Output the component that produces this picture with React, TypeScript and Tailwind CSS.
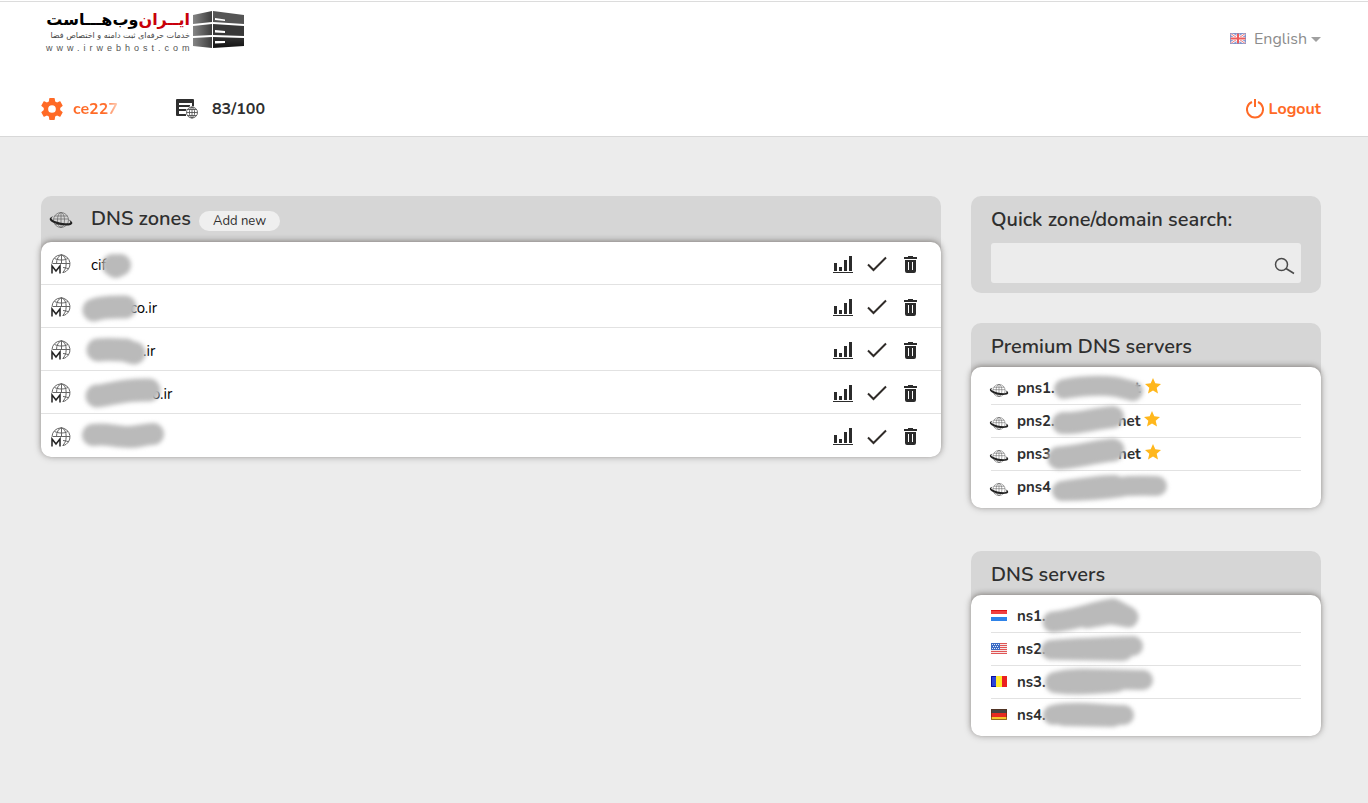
import { useState } from "react";

type IconProps = { className?: string };

type Zone = { name: string; gap: string; smudge: string; brush: number };

type Server = {
  name: string;
  tail?: string;
  tailGap?: string;
  flag?: string;
  star?: boolean;
  smudge: string;
  brush: number;
};

// Smudge paths are brush strokes, measured from the row's name cell.
const zones: Zone[] = [
  { name: "cif", gap: "pl-0", smudge: "M22 21 L25 23 L29 21", brush: 22 },
  { name: "co.ir", gap: "pl-[39px]", smudge: "M3 23 C14 19 26 20 34 20", brush: 23 },
  { name: ".ir", gap: "pl-[52px]", smudge: "M7 20 C16 19 26 20 35 20 M36 21 L43 23", brush: 23 },
  { name: "o.ir", gap: "pl-[61px]", smudge: "M6 23 C20 22 30 16 58 17", brush: 23 },
  { name: "", gap: "pl-0", smudge: "M2 19 C16 17 24 21 38 21 C48 21 54 18 62 18", brush: 22 },
];

const premium: Server[] = [
  { name: "pns1.", tail: "t", tailGap: "ml-[80px]", star: true, smudge: "M47 17 C65 14 85 13 100 15 L116 19", brush: 20 },
  { name: "pns2.", tail: "net", tailGap: "ml-[63px]", star: true, smudge: "M46 18 C60 19 75 14 96 12", brush: 22 },
  { name: "pns3", tail: "net", tailGap: "ml-[67px]", star: true, smudge: "M42 20 C60 19 75 14 96 12", brush: 23 },
  { name: "pns4", smudge: "M45 20 C60 18 80 14 98 14 M46 20 C75 20 90 18 104 16 C115 14 125 15 140 15", brush: 20 },
];

const servers: Server[] = [
  { name: "ns1.", flag: "nl", smudge: "M36 22 C60 20 75 12 96 9 L111 17 L94 14 L70 18", brush: 21 },
  { name: "ns2.", flag: "us", smudge: "M34 17 C60 15 90 14 116 13 M40 17 L106 18", brush: 20 },
  { name: "ns3.", flag: "ro", smudge: "M38 16 C60 10 90 14 126 14 M38 17 C60 20 80 18 100 16", brush: 20 },
  { name: "ns4.", flag: "de", smudge: "M36 16 C60 11 85 16 107 16 M46 17 L96 18", brush: 20 },
];

const Smudge = ({ d, brush }: { d: string; brush: number }) => (
  <svg
    aria-hidden="true"
    width="160"
    height="34"
    className="absolute left-0 top-0 overflow-visible pointer-events-none blur-[2px]"
  >
    <path d={d} fill="none" stroke="#bababa" strokeWidth={brush} strokeLinecap="round" strokeLinejoin="round" />
  </svg>
);

const ServerLogo = () => (
  <svg width="51" height="38" viewBox="0 0 51 38" aria-hidden="true">
    <defs>
      <linearGradient id="side" x1="0" x2="1">
        <stop offset="0" stopColor="#858585" />
        <stop offset="1" stopColor="#3d3d3d" />
      </linearGradient>
      <linearGradient id="front" x1="0" x2="0" y1="0" y2="1">
        <stop offset="0" stopColor="#333" />
        <stop offset="1" stopColor="#111" />
      </linearGradient>
    </defs>
    <path d="M0 5 L19 1 V12 L0 14 Z M0 16 L19 14 V25 L0 26 Z M0 28 L19 27 V38 L0 36 Z" fill="url(#side)" />
    <path d="M20 1 L51 5 V14 L20 12 Z" fill="#555" />
    <path d="M20 14 L51 16 V26 L20 25 Z" fill="#383838" />
    <path d="M20 27 L51 28 V36 L20 38 Z" fill="url(#front)" />
    <path d="M22 8 L32 9.500 V11 L22 10 Z M22 20 L32 21 V23 L22 22.500 Z M22 31 H32 V33 L22 33.500 Z" fill="#fff" />
  </svg>
);

const Gear = () => (
  <svg width="22" height="22" viewBox="2 2 20 20" fill="currentColor" aria-hidden="true">
    <path d="M19.43 12.98c.04-.32.07-.64.07-.98s-.03-.66-.07-.98l2.11-1.65c.19-.15.24-.42.12-.64l-2-3.46c-.12-.22-.39-.3-.61-.22l-2.49 1c-.52-.4-1.08-.73-1.69-.98l-.38-2.65A.49.49 0 0 0 14 2h-4c-.25 0-.46.18-.49.42l-.38 2.65c-.61.25-1.17.59-1.69.98l-2.49-1c-.23-.09-.49 0-.61.22l-2 3.46c-.13.22-.07.49.12.64l2.11 1.65c-.04.32-.07.65-.07.98s.03.66.07.98l-2.11 1.65c-.19.15-.24.42-.12.64l2 3.46c.12.22.39.3.61.22l2.49-1c.52.4 1.08.73 1.69.98l.38 2.65c.03.24.24.42.49.42h4c.25 0 .46-.18.49-.42l.38-2.65c.61-.25 1.17-.59 1.69-.98l2.49 1c.23.09.49 0 .61-.22l2-3.46c.12-.22.07-.49-.12-.64zM12 15.5a3.5 3.5 0 1 1 0-7 3.500 3.500 0 0 1 0 7z" />
  </svg>
);

const ZoneCount = () => (
  <svg width="23" height="20" viewBox="0 0 23 20" aria-hidden="true">
    <path d="M1 0 H17 Q18 0 18 1 V9 H16 V4 H3 V6 H14 V8 H3 V10 H11 V12 H3 V15 H10 V17 H1 Q0 17 0 16 V1 Q0 0 1 0 Z" fill="#2f2f2f" />
    <circle cx="16" cy="13.500" r="6.500" fill="#fff" />
    <g fill="none" stroke="#444" strokeWidth="0.800">
      <circle cx="16" cy="13.500" r="5.500" />
      <ellipse cx="16" cy="13.500" rx="2.600" ry="5.500" />
      <path d="M16 8 V19 M10.500 13.500 H21.500 M11.500 10.500 H20.500 M11.500 16.500 H20.500" />
    </g>
  </svg>
);

const Planet = ({ className }: IconProps) => (
  <svg viewBox="0 0 24 16" className={className} aria-hidden="true">
    <g fill="none" stroke="#666" strokeWidth="0.700">
      <circle cx="12" cy="8" r="7.500" />
      <ellipse cx="12" cy="8" rx="3.500" ry="7.500" />
      <path d="M12 0.500 V15.500 M5.500 4 H18.500 M4.500 7 H19.500 M6 12.500 H18" />
    </g>
    <path d="M4.500 4.500 C0 5 -0.500 8 3 10 C8 13 17 14.500 21.500 13 C25 11.500 23 9 19.500 7.500 C22 9.500 22 11 19 11.300 C14 11.600 7 10 3.800 8 C1.500 6.500 2.500 5.300 4.500 4.500 Z" fill="#222" />
  </svg>
);

const MasterGlobe = () => (
  <svg width="20" height="20" viewBox="0 0 20 20" aria-hidden="true">
    <g fill="none" stroke="#666" strokeWidth="1">
      <path d="M1 9.500 A9 9 0 1 1 12 18.700" />
      <path d="M10.500 0.500 V10 M5.500 9.500 C5.500 5 7.500 2 10.500 0.500 C13.500 2 15.200 5 15.200 9.500 C15.200 14 13.500 17 11.500 18.500" />
      <path d="M1.500 9.500 H19 M3.500 4.500 C8 6.500 13 6.500 17 4.500 M12 13.500 C14 13.600 16 14 17.300 14.700" />
    </g>
    <path d="M0 11 H10 V20 H0 Z" fill="#fff" />
    <path d="M1 19.500 V12 L5 17 L9 12 V19.500" fill="none" stroke="#222" strokeWidth="1.500" />
  </svg>
);

const Stats = () => (
  <svg width="20" height="19" viewBox="0 0 20 19" fill="#2b2b2b" aria-hidden="true">
    <path d="M1 8h3v8H1zM6 12h3v4H6zM11 5h3v11h-3zM16 1h3v15h-3zM0 17h20v1H0z" />
  </svg>
);

const Check = () => (
  <svg width="20" height="16" viewBox="0 0 20 16" fill="none" stroke="#2f2b28" strokeWidth="2" aria-hidden="true">
    <path d="M1 8.500 L6.500 14 L19 1.500" />
  </svg>
);

const Trash = () => (
  <svg width="13" height="17" viewBox="0 0 13 17" fill="#2b2b2b" aria-hidden="true">
    <path d="M0 1H4V0H9V1H13V3H0Z" />
    <path fillRule="evenodd" d="M1 4H12V15Q12 17 10 17H3Q1 17 1 15ZM4 6V14H5V6ZM8 6V14H9V6Z" />
  </svg>
);

const Star = () => (
  <svg width="16" height="16" viewBox="0 0 16 16" className="-mt-1 ml-1" aria-hidden="true">
    <path d="M8 0 L10.300 5.300 L16 5.900 L11.700 9.700 L13 15.500 L8 12.500 L3 15.500 L4.300 9.700 L0 5.900 L5.700 5.300 Z" fill="#ffb71c" />
  </svg>
);

const Flag = ({ code }: { code: string }) => (
  <svg width="16" height="11" viewBox="0 0 16 11" aria-hidden="true" className="mb-0.5 shrink-0">
    {code === "nl" && (
      <>
        <path d="M0 0h16v4H0z" fill="#f04040" />
        <path d="M0 4h16v3H0z" fill="#fff" />
        <path d="M0 7h16v4H0z" fill="#2f83e8" />
        <path d="M0 0h16v1H0z" fill="#e01212" />
      </>
    )}
    {code === "us" && (
      <>
        <path d="M0 0h16v11H0z" fill="#f6e6e6" />
        <path d="M0 .5h16M0 2.500h16M0 4.500h16M0 6.500h16M0 8.500h16M0 10.500h16" stroke="#e05555" />
        <path d="M0 0h9v7H0z" fill="#3c6cc4" />
        <path d="M1 1.500h7M2 3.500h6M1 5.500h7" stroke="#dfe8fa" strokeDasharray="1 1" />
      </>
    )}
    {code === "ro" && (
      <>
        <path d="M0 0h5v11H0z" fill="#2b45d8" />
        <path d="M5 0h6v11H5z" fill="#ffe92e" />
        <path d="M11 0h5v11h-5z" fill="#ea2020" />
        <path d="M.5 .5h4.500M.5 .5v10h4.500" stroke="#0a0fa0" fill="none" />
      </>
    )}
    {code === "de" && (
      <>
        <path d="M0 0h16v4H0z" fill="#444" />
        <path d="M0 4h16v4H0z" fill="#e62b20" />
        <path d="M0 8h16v3H0z" fill="#f5c62c" />
        <path d="M.5 .5h15v10H.5z" fill="none" stroke="#5a2a10" strokeOpacity=".6" />
      </>
    )}
    {code === "gb" && (
      <>
        <path d="M0 0h16v11H0z" fill="#8a9ed2" />
        <path d="M0 0l16 11M16 0L0 11" stroke="#fff" strokeWidth="2.500" />
        <path d="M0 0l16 11M16 0L0 11" stroke="#ef7a7a" />
        <path d="M8 0v11M0 5.500h16" stroke="#fff" strokeWidth="3" />
        <path d="M8 0v11M0 5.500h16" stroke="#ee5b5b" strokeWidth="2" />
        <path d="M.5 .5h15v10H.5z" fill="none" stroke="#7f8fc4" strokeOpacity=".7" />
      </>
    )}
  </svg>
);

const ServerPanel = ({ title, items }: { title: string; items: Server[] }) => (
  <section className="rounded-[10px] bg-[#d6d6d6]">
    <h2 className="h-11 px-5 text-xl font-semibold leading-[48px]">{title}</h2>
    <ul className="rounded-[10px] bg-white px-5 py-[5px] shadow-[0_0_8px_rgba(0,0,0,0.2),0_-1px_5px_rgba(60,50,40,0.35)]">
      {items.map((s) => (
        <li key={s.name} className="flex h-[33px] items-center border-b border-[#e2e2e2] last:h-8 last:border-0">
          <span className="flex w-[26px] shrink-0">
            {s.flag ? <Flag code={s.flag} /> : <Planet className="-ml-0.5 mt-1 h-[13px] w-5" />}
          </span>
          <div className="relative flex h-full items-center text-[15px] font-bold">
            <span>{s.name}</span>
            {s.tail && <span className={s.tailGap}>{s.tail}</span>}
            {s.star && <Star />}
            <Smudge d={s.smudge} brush={s.brush} />
          </div>
        </li>
      ))}
    </ul>
  </section>
);

const App = () => {
  const [query, setQuery] = useState("");

  return (
    <div className="min-h-screen bg-[#ececec] font-['Nunito','Open_Sans',sans-serif] text-[#2f2f2f]">
      <header className="border-b border-[#d8d8d8] bg-white pt-px">
        <div className="flex h-[81px] items-start justify-between border-t border-[#dcdcdc] pl-[46px] pr-[47px]">
          <a href="#" className="mt-2 flex gap-[3px] text-black">
            <div className="w-36 whitespace-nowrap font-['DejaVu_Sans',sans-serif]">
              <div dir="rtl" lang="fa" className="text-[16px] font-bold leading-5">
                <span className="text-[#c8000a]">ایــران</span>‌وب‌هـــاست
              </div>
              <div dir="rtl" lang="fa" className="text-[8px] leading-3 text-[#444]">
                خدمات حرفه‌ای ثبت دامنه و اختصاص فضا
              </div>
              <div className="font-['Liberation_Sans',sans-serif] text-[9px] leading-3 tracking-[4px] text-[#555]">
                www.irwebhost.com
              </div>
            </div>
            <ServerLogo />
          </a>
          <button type="button" className="mt-[25px] flex items-center text-base leading-6 text-[#8c8c8c]">
            <Flag code="gb" />
            <span className="ml-2">English</span>
            <span className="ml-1 border-x-[5px] border-t-[5px] border-x-transparent border-t-[#a0a0a0]" />
          </button>
        </div>
        <nav className="flex h-[54px] items-center pl-[41px] pr-[47px] text-base font-bold">
          <a href="#" className="flex w-[135px] items-center gap-2.5 text-[#ff6a26]">
            <Gear />
            <span className="bg-linear-to-r from-[#ff6a26] from-70% to-[#ffd0b8] bg-clip-text text-transparent">ce227</span>
          </a>
          <a href="#" className="flex items-center gap-[13px]">
            <ZoneCount />
            <span>83/100</span>
          </a>
          <a href="#" className="ml-auto flex items-center gap-[5px] text-[#ff6a26]">
            <svg width="18" height="20" viewBox="0 0 18 20" fill="none" stroke="currentColor" strokeWidth="2" aria-hidden="true">
              <path d="M6 3 A8 8 0 1 0 12 3 M9 0 V8" />
            </svg>
            Logout
          </a>
        </nav>
      </header>

      <main className="flex items-start gap-[30px] pb-12 pl-[41px] pr-[47px] pt-[59px]">
        <section className="min-w-0 flex-1 rounded-[10px] bg-[#d6d6d6]">
          <div className="flex h-[46px] items-center pl-2">
            <Planet className="mt-0.5 h-4 w-6" />
            <h2 className="ml-[18px] text-xl font-semibold">DNS zones</h2>
            <button type="button" className="ml-2 mt-1 h-5 rounded-full bg-[#efefef] px-3.5 text-[13px] leading-5">
              Add new
            </button>
          </div>
          <ul className="rounded-[10px] bg-white shadow-[0_0_8px_rgba(0,0,0,0.2),0_-1px_5px_rgba(60,50,40,0.35)]">
            {zones.map((z, i) => (
              <li key={i} className="flex h-[43px] items-center border-b border-[#e2e2e2] pl-2.5 pr-6 pt-0.5 last:border-0">
                <MasterGlobe />
                <div className="relative ml-5 flex h-full flex-1 items-center pt-0.5 text-[15px] text-black">
                  <span className={z.gap}>{z.name}</span>
                  <Smudge d={z.smudge} brush={z.brush} />
                </div>
                <button type="button" aria-label="Statistics"><Stats /></button>
                <button type="button" aria-label="Active" className="ml-3.5"><Check /></button>
                <button type="button" aria-label="Delete" className="ml-[17px]"><Trash /></button>
              </li>
            ))}
          </ul>
        </section>

        <aside className="w-[350px] shrink-0">
          <form className="rounded-[10px] bg-[#d6d6d6] px-5 pb-2.5" onSubmit={(e) => e.preventDefault()}>
            <label htmlFor="zone-search" className="block h-[47px] text-xl font-semibold leading-[48px]">
              Quick zone/domain search:
            </label>
            <div className="flex h-10 items-center rounded-[3px] bg-[#ececec] pr-1.5">
              <input
                id="zone-search"
                value={query}
                onChange={(e) => setQuery(e.target.value)}
                className="h-full min-w-0 flex-1 bg-transparent px-3 text-[15px] outline-none"
              />
              <button type="submit" aria-label="Search" className="mt-1.5">
                <svg width="21" height="18" viewBox="0 0 21 18" fill="none" stroke="#4a4a4a" strokeWidth="1.500" aria-hidden="true">
                  <circle cx="7.500" cy="7.500" r="6" />
                  <path d="M12 11.500 L20 16.500" />
                </svg>
              </button>
            </div>
          </form>
          <div className="mt-[30px] flex flex-col gap-[43px]">
            <ServerPanel title="Premium DNS servers" items={premium} />
            <ServerPanel title="DNS servers" items={servers} />
          </div>
        </aside>
      </main>
    </div>
  );
};

export default App;
